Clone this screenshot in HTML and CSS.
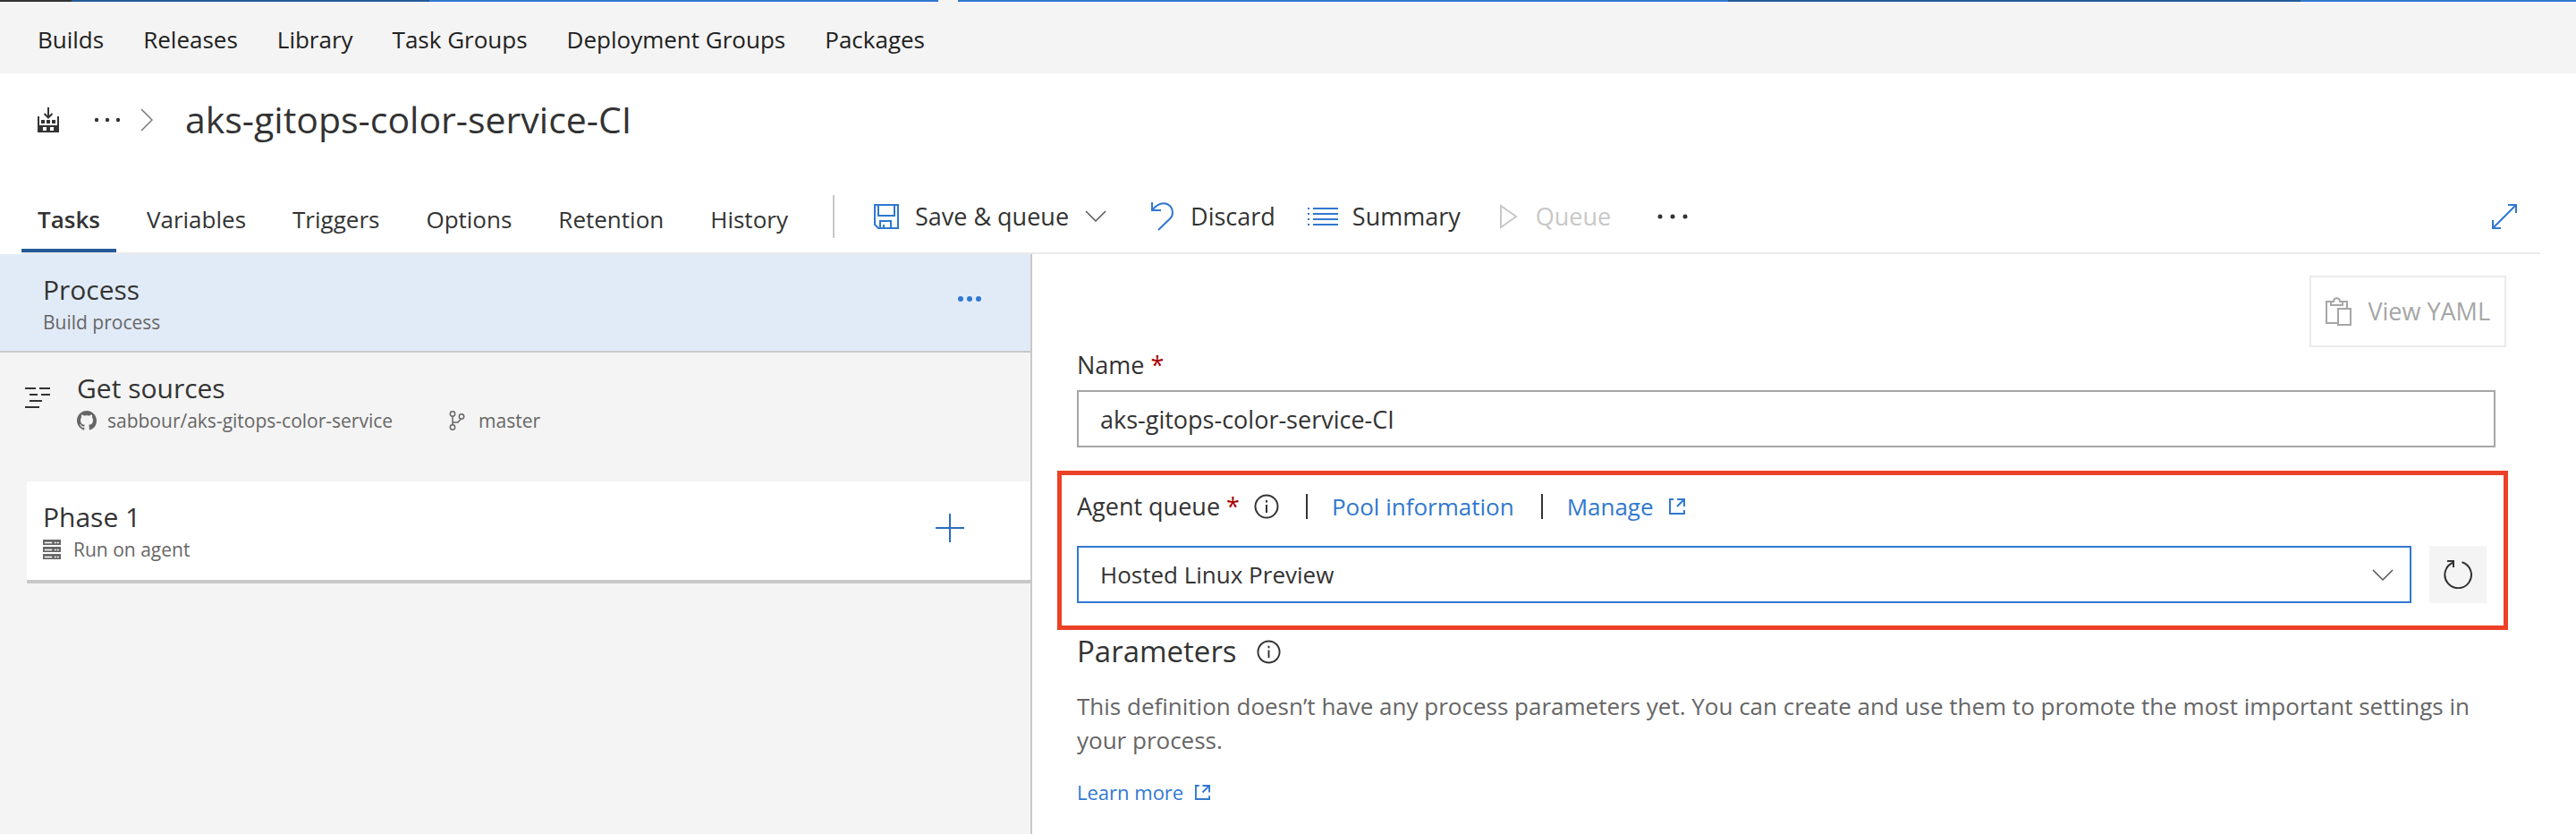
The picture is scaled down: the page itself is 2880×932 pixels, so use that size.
FILE: index.html
```html
<!DOCTYPE html>
<html lang="en">
<head>
<meta charset="utf-8">
<title>aks-gitops-color-service-CI</title>
<link rel="stylesheet" href="styles.css">
</head>
<body>
<div class="strip"><span class="strip-dark"></span><span class="strip-navy"></span><span class="strip-blue"></span><span class="strip-gap"></span><span class="strip-rest"></span><span class="strip-search"></span><span class="strip-end"></span></div>
<nav class="hub">
  <a href="#">Builds</a><a href="#">Releases</a><a href="#">Library</a><a href="#">Task Groups</a><a href="#">Deployment Groups</a><a href="#">Packages</a>
</nav>
<header class="crumbs">
  <svg class="i-build" width="24" height="28" viewBox="0 0 24 28"><path d="M0 10h2v10h20V10h2v18H0z M6 22v4h4v-4z M14 22v4h4v-4z M4 14h4v4H4z M10 14h4v4h-4z M16 14h4v4h-4z" fill="#333" fill-rule="evenodd"/><path d="M12 0v11M7.500 7l4.500 4.500L16.500 7" fill="none" stroke="#333" stroke-width="2"/></svg>
  <button class="plain crumb-more" aria-label="More"><svg width="30" height="6" viewBox="0 0 30 6" fill="#333"><circle cx="3" cy="3" r="2.200"/><circle cx="15" cy="3" r="2.200"/><circle cx="27" cy="3" r="2.200"/></svg></button>
  <svg class="i-crumb" width="14" height="26" viewBox="0 0 14 26"><path d="M1 1l12 12L1 25" fill="none" stroke="#777" stroke-width="1.500"/></svg>
  <h1>aks-gitops-color-service-CI</h1>
</header>
<div class="bar">
  <div class="tabs">
    <a class="tab on" href="#">Tasks</a><a class="tab" href="#">Variables</a><a class="tab" href="#">Triggers</a><a class="tab" href="#">Options</a><a class="tab" href="#">Retention</a><a class="tab" href="#">History</a>
  </div>
  <span class="sep"></span>
  <div class="tools">
    <button class="plain tool save"><svg width="28" height="28" viewBox="0 0 28 28" fill="none" stroke="#3078d0" stroke-width="2"><path d="M1 1h26v26H5l-4-4zM5 1v12h18V1M7 27v-8h12v8M11 27v-4"/></svg>Save &amp; queue<svg width="24" height="14" viewBox="0 0 24 14"><path d="M1 1l11 11L23 1" fill="none" stroke="#555" stroke-width="1.500"/></svg></button>
    <button class="plain tool discard"><svg width="26" height="32" viewBox="0 0 26 32" fill="none" stroke="#3078d0" stroke-width="2"><path d="M1 0v9h10M1.500 8.500C5 4 9 1.200 14 1.200c6 0 10 4.800 10 10.300 0 3-1 5-3 7L8 31"/></svg>Discard</button>
    <button class="plain tool summary"><svg width="34" height="22" viewBox="0 0 34 22" fill="#3078d0"><path d="M0 1h2v2H0zM0 7h2v2H0zM0 13h2v2H0zM0 19h2v2H0zM6 1h28v2H6zM6 7h28v2H6zM6 13h28v2H6zM6 19h28v2H6z"/></svg>Summary</button>
    <button class="plain tool queue" disabled><svg width="20" height="28" viewBox="0 0 20 28"><path d="M1 2v24l17-12z" fill="none" stroke="#c8c8c8" stroke-width="2"/></svg>Queue</button>
    <button class="plain tool" aria-label="More actions"><svg width="36" height="6" viewBox="0 0 36 6" fill="#333"><circle cx="3" cy="3" r="2.500"/><circle cx="17" cy="3" r="2.500"/><circle cx="31" cy="3" r="2.500"/></svg></button>
  </div>
  <button class="plain expand" aria-label="Full screen"><svg width="28" height="28" viewBox="0 0 28 28" fill="none" stroke="#3078d0" stroke-width="2"><path d="M18 1h9v9M27 1L1 27M1 18v9h9"/></svg></button>
</div>
<div class="body">
  <aside class="side">
    <section class="process">
      <div><h2>Process</h2><p>Build process</p></div>
      <button class="plain" aria-label="Process actions"><svg width="28" height="8" viewBox="0 0 28 8" fill="#3078d0"><circle cx="4" cy="4" r="3"/><circle cx="14" cy="4" r="3"/><circle cx="24" cy="4" r="3"/></svg></button>
    </section>
    <section class="sources">
      <svg class="i-src" width="28" height="24" viewBox="0 0 28 24" fill="#333"><path d="M0 0h12v2H0zM16 0h12v2H16zM5 7h9v2H5zM18 7h10v2H18zM5 14h14v2H5zM0 21h16v2H0z"/></svg>
      <div><h2>Get sources</h2>
        <p><svg width="22" height="22" viewBox="0 0 16 16" fill="#666"><path d="M8 0C3.580 0 0 3.580 0 8c0 3.540 2.290 6.530 5.470 7.590.4.070.55-.17.55-.38 0-.19-.01-.82-.01-1.490-2.010.37-2.530-.49-2.690-.94-.09-.23-.48-.94-.82-1.130-.28-.15-.68-.52-.01-.53.63-.01 1.080.58 1.230.82.72 1.210 1.870.87 2.330.66.07-.52.28-.87.51-1.070-1.780-.2-3.640-.89-3.640-3.950 0-.87.31-1.590.82-2.150-.08-.2-.36-1.020.08-2.120 0 0 .67-.21 2.200.82.64-.18 1.320-.27 2-.27s1.360.09 2 .27c1.530-1.040 2.200-.82 2.200-.82.44 1.100.16 1.920.08 2.120.51.56.82 1.270.82 2.150 0 3.070-1.870 3.750-3.650 3.950.29.25.54.73.54 1.480 0 1.070-.01 1.930-.01 2.200 0 .21.15.46.55.38A8 8 0 0 0 16 8c0-4.420-3.580-8-8-8z"/></svg><span class="repo">sabbour/aks-gitops-color-service</span><svg width="18" height="22" viewBox="0 0 18 22" fill="none" stroke="#666" stroke-width="1.500"><circle cx="4" cy="3.500" r="2.700"/><circle cx="4" cy="18.500" r="2.700"/><circle cx="14" cy="6.500" r="2.700"/><path d="M4 6v10M4 13h6l3.500-4"/></svg><span class="branch">master</span></p></div>
    </section>
    <section class="phase">
      <div><h2>Phase 1</h2>
        <p><svg width="20" height="22" viewBox="0 0 20 22"><path d="M0 0h20v6H0zM0 8h20v6H0zM0 16h20v6H0z" fill="#666"/><path d="M2 3h8v1H2zM2 11h8v1H2zM2 19h8v1H2zM13 3h1.500v1H13zM16 3h1.500v1H16zM13 11h1.500v1H13zM16 11h1.500v1H16zM13 19h1.500v1H13zM16 19h1.500v1H16z" fill="#fff" stroke="#fff" stroke-width=".5"/></svg><span class="agent">Run on agent</span></p></div>
      <button class="plain" aria-label="Add task"><svg width="32" height="32" viewBox="0 0 32 32"><path d="M16 0v32M0 16h32" stroke="#2b6cbb" stroke-width="2"/></svg></button>
    </section>
  </aside>
  <main class="main">
    <button class="yaml" disabled><svg width="29" height="32" viewBox="0 0 29 32" fill="none" stroke="#a6a6a6" stroke-width="2"><path d="M13 29H1V5h5M19 5h5v8M6 5v4h13V5h-3c0-5-7-5-7 0zM14 13h14v18H14z"/></svg>View YAML</button>
    <label class="label" for="name">Name <b>*</b></label>
    <input class="field name" id="name" type="text" value="aks-gitops-color-service-CI">
    <section class="callout">
      <div class="label queue-label"><label for="agent">Agent queue <b>*</b></label><svg class="i-info" width="28" height="28" viewBox="0 0 28 28"><circle cx="14" cy="14" r="12.500" fill="none" stroke="#333" stroke-width="2"/><path d="M13 12h2v9h-2zM13 7h2v2.500h-2z" fill="#333"/></svg><i></i><a href="#">Pool information</a><i></i><a href="#">Manage<svg class="i-ext" width="18" height="18" viewBox="0 0 18 18" fill="none" stroke="#3078d0" stroke-width="2"><path d="M5 1H1v16h16v-4M9 1h8v8M17 1L9 9"/></svg></a></div>
      <div class="pick">
        <div class="select-wrap"><select class="field" id="agent"><option>Hosted Linux Preview</option></select><svg class="arrow" width="24" height="14" viewBox="0 0 24 14"><path d="M1 1l11 11L23 1" fill="none" stroke="#555" stroke-width="1.500"/></svg></div>
        <button class="refresh" aria-label="Refresh"><svg width="32" height="32" viewBox="0 0 32 32" fill="none" stroke="#333" stroke-width="2"><path d="M20.500 2.200A14.800 14.800 0 1 1 11 2.500M4 1h7v7"/></svg></button>
      </div>
    </section>
    <h3>Parameters<svg width="27" height="27" viewBox="0 0 28 28"><circle cx="14" cy="14" r="12.500" fill="none" stroke="#333" stroke-width="2"/><path d="M13 12h2v9h-2zM13 7h2v2.500h-2z" fill="#333"/></svg></h3>
    <p class="desc">This definition doesn’t have any process parameters yet. You can create and use them to promote the most important settings in your process.</p>
    <a class="learn" href="#">Learn more<svg width="17" height="17" viewBox="0 0 18 18" fill="none" stroke="#3078d0" stroke-width="2"><path d="M5 1H1v16h16v-4M9 1h8v8M17 1L9 9"/></svg></a>
  </main>
</div>
</body>
</html>
```
FILE: styles.css
```css
* { box-sizing: border-box; }
body { margin: 0; min-height: 100vh; display: flex; flex-direction: column; background: #fff; color: #333; font: 27px/38px "Segoe UI", "Open Sans", "Noto Sans", sans-serif; }
h1, h2, h3, p { margin: 0; font-weight: 400; }
a { color: #3078d0; text-decoration: none; }
svg { flex: none; display: block; }
.plain { border: 0; background: none; padding: 0; margin: 0; font: inherit; color: inherit; }

.strip { display: flex; height: 2px; background: #f4f4f4; }
.strip-dark { width: 80px; background: #333; }
.strip-navy { width: 400px; background: #245a98; }
.strip-blue { width: 569px; background: #3078d0; }
.strip-gap { width: 22px; }
.strip-rest { flex: 1; background: #3078d0; }
.strip-search { width: 640px; background: #245a98; }
.strip-end { width: 308px; background: #3078d0; }

.hub { display: flex; gap: 44px; height: 80px; padding: 23px 42px 0; background: #f4f4f4; font-size: 26px; }
.hub a { color: #212121; }

.crumbs { display: flex; align-items: center; height: 104px; padding-left: 42px; }
.crumb-more { margin: 0 22px 0 39px; }
h1 { margin-left: 36px; padding-bottom: 2px; font-size: 41px; line-height: 52px; }

.bar { display: flex; height: 98px; margin: 0 40px 0 24px; border-bottom: 2px solid #eaeaea; }
.tabs { display: flex; gap: 16px; align-items: flex-end; font-size: 26px; }
.tab { height: 60px; padding: 4px 18px 0; color: #333; }
.tab.on { font-weight: 600; border-bottom: 4px solid #245a98; }
.sep { width: 2px; height: 48px; margin: 32px 44px 0 32px; background: #c8c8c8; }
.tools { display: flex; align-items: center; height: 38px; margin-top: 37px; }
.tool { display: flex; align-items: center; gap: 18px; }
.save { margin-right: 50px; }
.discard { margin-right: 36px; }
.summary { gap: 16px; margin-right: 44px; }
.queue { gap: 20px; margin-right: 52px; color: #c8c8c8; }
.expand { align-self: flex-start; margin: 42px 26px 0 auto; }

.body { display: flex; flex: 1; }
.side { width: 1154px; flex: none; background: #f4f4f4; border-right: 2px solid #c8c8c8; }
h2 { font-size: 30px; line-height: 40px; }
.side p { display: flex; align-items: center; height: 32px; font-size: 21px; line-height: 32px; color: #666; }
.process, .phase { display: flex; justify-content: space-between; }
.process { height: 110px; padding: 20px 54px 0 48px; background: #e1ebf7; border-bottom: 2px solid #c8c8c8; align-items: flex-start; }
.process button { padding-top: 26px; }
.sources { display: flex; height: 144px; padding: 20px 0 0 28px; }
.i-src { margin-top: 19px; }
.sources div { margin-left: 30px; }
.repo { margin: 0 63px 0 12px; }
.branch { margin-left: 15px; }
.phase { height: 114px; margin-left: 30px; padding: 20px 74px 0 18px; background: #fff; border-bottom: 4px solid #c8c8c8; align-items: flex-start; }
.phase button { padding-top: 16px; }
.agent { margin-left: 14px; }

.main { flex: 1; display: flex; flex-direction: column; align-items: flex-start; padding: 24px 78px 0 50px; }
.yaml { display: flex; align-items: center; gap: 18px; align-self: flex-end; height: 80px; padding: 0 16px; border: 2px solid #eaeaea; background: #fff; color: #a6a6a6; font: inherit; }
.label { line-height: 38px; }
.label b { font-weight: 400; color: #a80000; }
.main > .label { margin-top: 1px; }
.field { width: 100%; height: 64px; padding: 0 24px; border: 2px solid #a6a6a6; border-radius: 0; background: #fff; color: #333; font: inherit; }
.name { width: calc(100% - 12px); margin-top: 9px; }
.callout { align-self: stretch; margin: 26px -2px 0 -22px; padding: 16px 19px 25px 17px; border: 5px solid #ec4128; }
.queue-label { display: flex; align-items: center; height: 38px; }
.i-info { margin-left: 16px; }
.queue-label i { width: 2px; height: 28px; margin: 0 27px 0 30px; background: #333; }
.queue-label a { display: flex; align-items: center; font-size: 26px; }
.i-ext { margin-left: 17px; }
.pick { display: flex; gap: 20px; margin-top: 25px; }
.select-wrap { position: relative; flex: 1; }
.select-wrap .field { appearance: none; border-color: #3078d0; font-size: 26px; }
.arrow { position: absolute; right: 20px; top: 26px; pointer-events: none; }
.refresh { display: grid; place-items: center; width: 64px; height: 64px; padding: 0; border: 0; background: #f4f4f4; }
h3 { display: flex; align-items: center; gap: 22px; font-size: 33px; line-height: 48px; }
.desc { margin-top: 18px; font-size: 26px; color: #666; }
.learn { display: flex; align-items: center; gap: 13px; margin-top: 20px; font-size: 22px; line-height: 38px; }
```
